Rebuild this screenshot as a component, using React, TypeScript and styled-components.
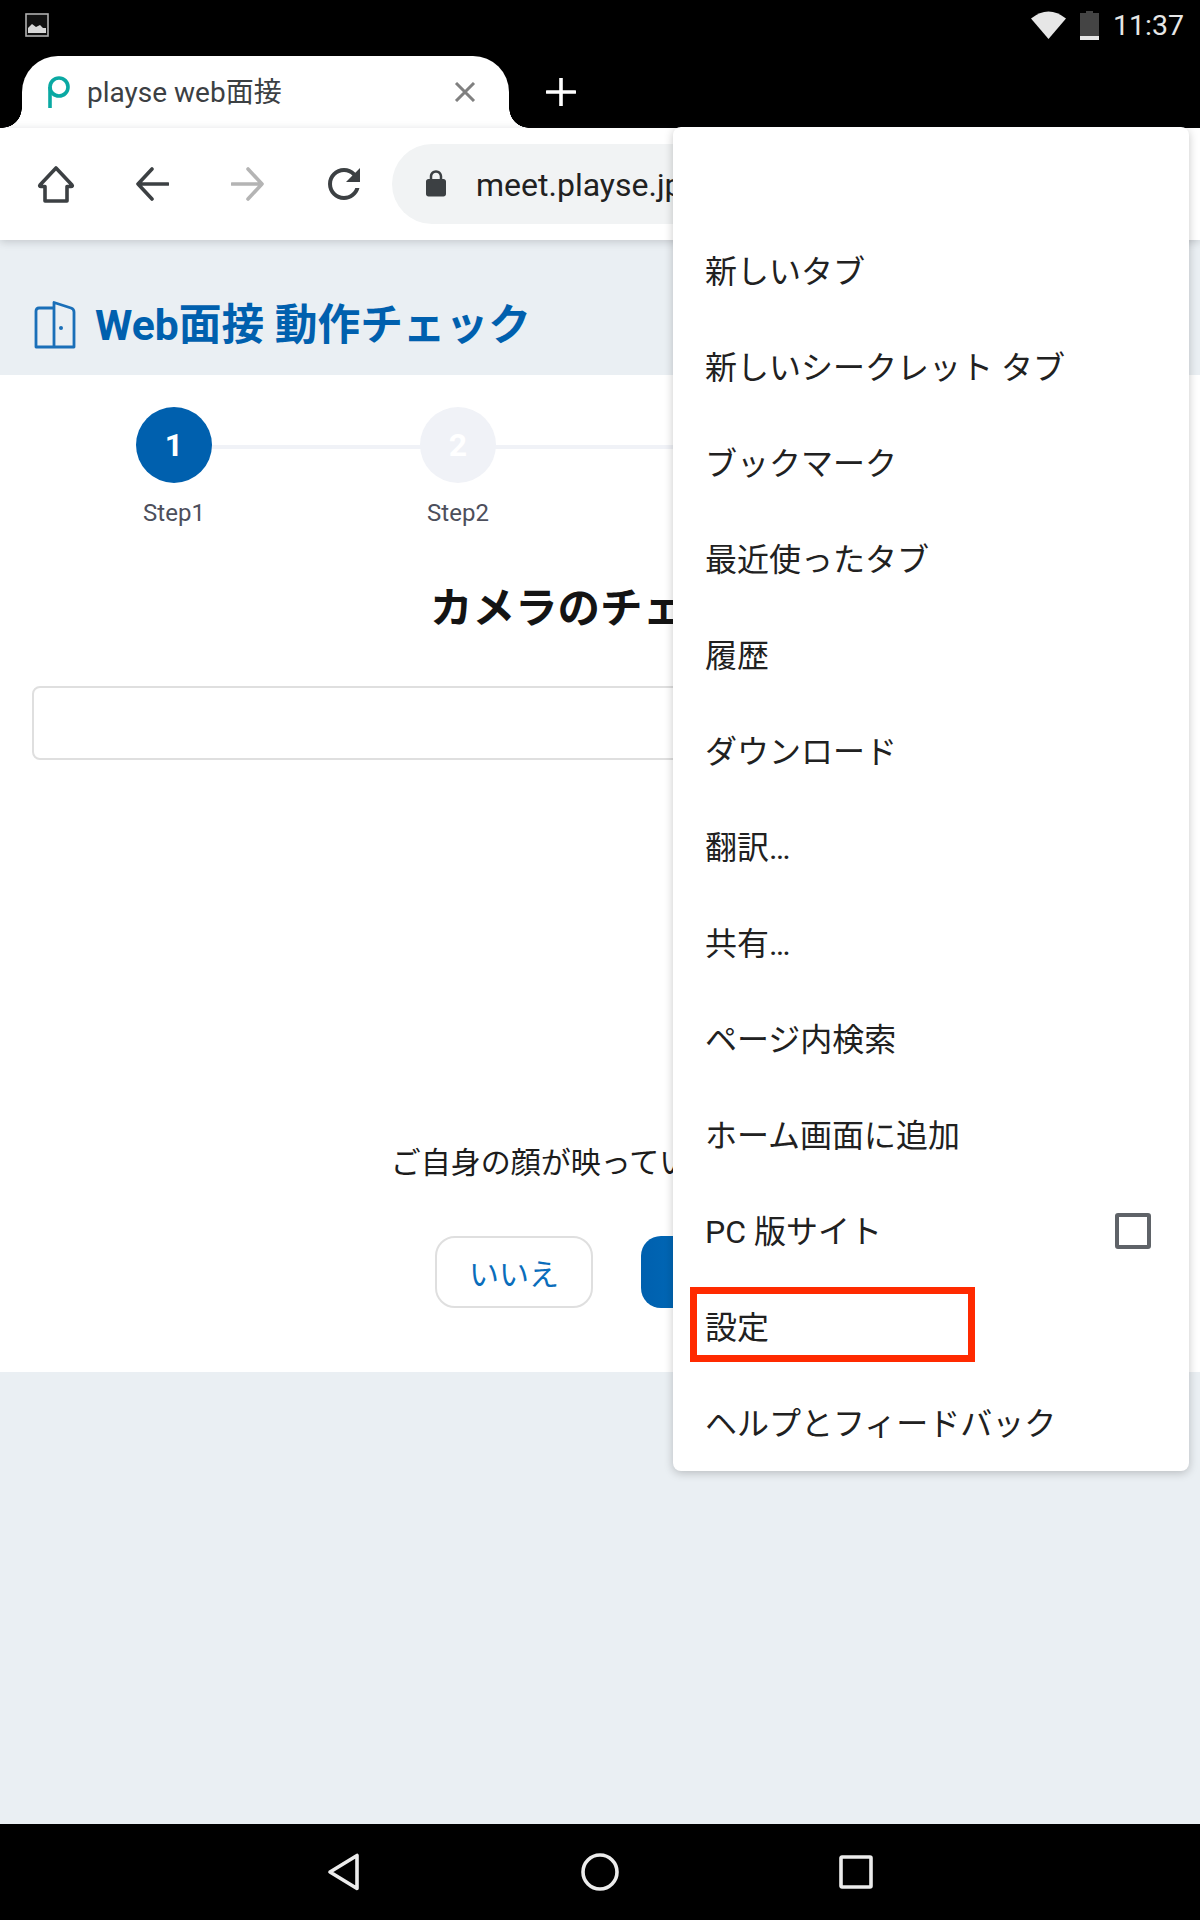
import React from 'react';
import styled, { createGlobalStyle } from 'styled-components';

const colors = {
  black: '#000000',
  pageBg: '#eaeff3',
  white: '#ffffff',
  blue: '#0060ae',
  icon: '#3c4043',
  text: '#212121',
  border: '#dfdfdf',
  stepIdle: '#f0f2f7',
};

const GlobalStyle = createGlobalStyle`
  html, body {
    margin: 0;
    padding: 0;
    background: ${colors.black};
  }
  * {
    box-sizing: border-box;
  }
  body {
    font-family: Roboto, "Noto Sans CJK JP", sans-serif;
  }
`;

const menuItems = [
  '新しいタブ',
  '新しいシークレット タブ',
  'ブックマーク',
  '最近使ったタブ',
  '履歴',
  'ダウンロード',
  '翻訳…',
  '共有…',
  'ページ内検索',
  'ホーム画面に追加',
  'PC 版サイト',
  '設定',
  'ヘルプとフィードバック',
];

const steps = ['Step1', 'Step2', 'Step3', 'Step4'];

export default function App() {
  return (
    <Screen>
      <GlobalStyle />
      <StatusBar>
        <PictureIcon />
        <StatusRight>
          <WifiIcon />
          <BatteryIcon />
          <Clock>11:37</Clock>
        </StatusRight>
      </StatusBar>
      <TabStrip>
        <Tab>
          <FaviconIcon />
          <TabTitle>playse web面接</TabTitle>
          <CloseIcon />
        </Tab>
        <PlusIcon />
      </TabStrip>
      <Toolbar>
        <ToolButton>
          <HomeIcon />
        </ToolButton>
        <ToolButton>
          <ArrowIcon color={colors.icon} />
        </ToolButton>
        <ToolButton>
          <ArrowIcon color="#b4b4b4" flip />
        </ToolButton>
        <ToolButton>
          <ReloadIcon />
        </ToolButton>
        <UrlPill>
          <LockIcon />
          <UrlText>meet.playse.jp</UrlText>
        </UrlPill>
      </Toolbar>
      <Main>
        <PageHeader>
          <HeaderIcon>
            <DoorIcon />
          </HeaderIcon>
          <PageTitle>Web面接 動作チェック</PageTitle>
        </PageHeader>
        <Content>
          <StepRow>
            {steps.map((step, index) => (
              <Step key={step} $last={index === steps.length - 1}>
                <StepCircle $active={index === 0}>{index + 1}</StepCircle>
                <StepLabel>{step}</StepLabel>
              </Step>
            ))}
          </StepRow>
          <Heading>カメラのチェック</Heading>
          <SelectBox />
          <VideoArea />
          <Question>ご自身の顔が映っていますか{'\uFF1F'}</Question>
          <ButtonRow>
            <OutlineButton>いいえ</OutlineButton>
            <PrimaryButton>はい</PrimaryButton>
          </ButtonRow>
        </Content>
      </Main>
      <NavBar>
        <NavSlot>
          <NavBackIcon />
        </NavSlot>
        <NavSlot>
          <NavHomeIcon />
        </NavSlot>
        <NavSlot>
          <NavRecentIcon />
        </NavSlot>
      </NavBar>
      <Menu>
        <MenuSpacer />
        {menuItems.map((item) => (
          <MenuRow key={item}>
            <MenuLabel>{item}</MenuLabel>
            {item === 'PC 版サイト' && <MenuCheckbox />}
          </MenuRow>
        ))}
        <Highlight />
      </Menu>
    </Screen>
  );
}

function PictureIcon() {
  return (
    <svg width="24" height="24" viewBox="0 0 24 24">
      <rect x="1" y="1" width="22" height="22" fill="#111" stroke="#b0b0b0" strokeWidth="1.6" />
      <path d="M3 20 V15 L7 11 L11 14 L15 12 L18 15 L21 15 V20 Z" fill="#d8d8d8" />
    </svg>
  );
}

function WifiIcon() {
  return (
    <svg width="35" height="28" viewBox="0 0 35 28">
      <path d="M0 7.5 Q17.5 -6.5 35 7.5 L17.5 28 Z" fill="#e6e6e6" />
    </svg>
  );
}

function BatteryIcon() {
  return (
    <svg width="19" height="29" viewBox="0 0 19 29">
      <path d="M6 0 H13 V2 H19 V25 H0 V2 H6 Z" fill="#444444" />
      <rect x="0" y="25" width="19" height="4" fill="#e6e6e6" />
    </svg>
  );
}

function FaviconIcon() {
  return (
    <svg width="23" height="33" viewBox="0 0 23 33">
      <circle cx="12" cy="11" r="9" fill="none" stroke="#0aa9a3" strokeWidth="3.6" />
      <path d="M3 11 V32" fill="none" stroke="#0aa9a3" strokeWidth="3.6" />
    </svg>
  );
}

function CloseIcon() {
  return (
    <svg width="22" height="20" viewBox="0 0 22 20">
      <path d="M2 1 L20 19 M20 1 L2 19" stroke="#808080" strokeWidth="3" fill="none" />
    </svg>
  );
}

function PlusIcon() {
  return (
    <svg width="30" height="28" viewBox="0 0 30 28">
      <path d="M15 0 V28 M1 14 H29" stroke="#ffffff" strokeWidth="3.6" strokeLinecap="round" fill="none" />
    </svg>
  );
}

function HomeIcon() {
  return (
    <svg width="40" height="40" viewBox="0 0 40 40">
      <path
        d="M20 4 L36 21 Q37 22.5 35 22.5 H31 V37 H9 V22.5 H5 Q3 22.5 4 21 Z"
        fill="none"
        stroke={colors.icon}
        strokeWidth="3.6"
        strokeLinejoin="round"
      />
    </svg>
  );
}

function ArrowIcon({ color, flip }: { color: string; flip?: boolean }) {
  return (
    <svg width="34" height="34" viewBox="0 0 34 34" style={flip ? { transform: 'scaleX(-1)' } : undefined}>
      <path
        d="M17 2 L3 17 L17 32 M3 17 H33"
        fill="none"
        stroke={color}
        strokeWidth="3.6"
        strokeLinecap="round"
        strokeLinejoin="round"
      />
    </svg>
  );
}

function ReloadIcon() {
  return (
    <svg width="48" height="48" viewBox="0 0 24 24">
      <path
        d="M17.65 6.35C16.2 4.9 14.21 4 12 4c-4.42 0-7.99 3.58-7.99 8s3.57 8 7.99 8c3.73 0 6.84-2.55 7.73-6h-2.08c-.82 2.33-3.04 4-5.65 4-3.31 0-6-2.69-6-6s2.69-6 6-6c1.66 0 3.14.69 4.22 1.78L13 11h7V4l-2.35 2.35z"
        fill={colors.icon}
      />
    </svg>
  );
}

function LockIcon() {
  return (
    <svg width="30" height="30" viewBox="0 0 24 24">
      <path
        d="M18 8h-1V6c0-2.76-2.24-5-5-5S7 3.24 7 6v2H6c-1.1 0-2 .9-2 2v10c0 1.1.9 2 2 2h12c1.1 0 2-.9 2-2V10c0-1.1-.9-2-2-2zM9 6c0-1.66 1.34-3 3-3s3 1.34 3 3v2H9V6z"
        fill={colors.icon}
      />
    </svg>
  );
}

function DoorIcon() {
  return (
    <svg width="42" height="48" viewBox="0 0 42 48">
      <path
        d="M20 7 H5 Q2 7 2 10 V46 H40 V11 Q40 8 37 7 L20 1.5 V46"
        fill="none"
        stroke="#1a6fb8"
        strokeWidth="2.8"
        strokeLinejoin="round"
      />
      <circle cx="27" cy="27" r="2" fill="#1a6fb8" />
    </svg>
  );
}

function NavBackIcon() {
  return (
    <svg width="34" height="38" viewBox="0 0 34 38">
      <path
        d="M30 2.5 V35.5 L3 19 Z"
        fill="none"
        stroke="#ececec"
        strokeWidth="3.6"
        strokeLinejoin="round"
      />
    </svg>
  );
}

function NavHomeIcon() {
  return (
    <svg width="38" height="38" viewBox="0 0 38 38">
      <circle cx="19" cy="19" r="17" fill="none" stroke="#ececec" strokeWidth="3.6" />
    </svg>
  );
}

function NavRecentIcon() {
  return (
    <svg width="34" height="34" viewBox="0 0 34 34">
      <rect x="2" y="2" width="30" height="30" rx="1" fill="none" stroke="#ececec" strokeWidth="3.6" />
    </svg>
  );
}

const Screen = styled.div`
  position: relative;
  width: 1200px;
  height: 1920px;
  display: flex;
  flex-direction: column;
  overflow: hidden;
  background: ${colors.pageBg};
`;

const StatusBar = styled.div`
  height: 56px;
  flex: none;
  display: flex;
  align-items: center;
  justify-content: space-between;
  padding: 0 16px 6px 25px;
  background: ${colors.black};
`;

const StatusRight = styled.div`
  display: flex;
  align-items: center;
  gap: 14px;
`;

const Clock = styled.span`
  font-size: 28.5px;
  color: #e6e6e6;
`;

const TabStrip = styled.div`
  height: 72px;
  flex: none;
  display: flex;
  align-items: center;
  padding-left: 22px;
  gap: 37px;
  background: ${colors.black};
`;

const Tab = styled.div`
  position: relative;
  width: 487px;
  height: 72px;
  display: flex;
  align-items: center;
  padding: 0 33px 0 25px;
  background: ${colors.white};
  border-radius: 36px 36px 0 0;

  &::before,
  &::after {
    content: '';
    position: absolute;
    bottom: 0;
    width: 20px;
    height: 20px;
  }

  &::before {
    left: -20px;
    background: radial-gradient(circle at 0 0, transparent 19.5px, ${colors.white} 20px);
  }

  &::after {
    right: -20px;
    background: radial-gradient(circle at 100% 0, transparent 19.5px, ${colors.white} 20px);
  }
`;

const TabTitle = styled.span`
  flex: 1;
  margin: 0 0 4px 17px;
  font-size: 28px;
  color: ${colors.icon};
`;

const Toolbar = styled.div`
  position: relative;
  z-index: 1;
  height: 112px;
  flex: none;
  display: flex;
  align-items: center;
  padding: 0 100px 0 8px;
  background: ${colors.white};
  box-shadow: 0 2px 8px rgba(60, 64, 67, 0.22);
`;

const ToolButton = styled.div`
  width: 96px;
  height: 80px;
  flex: none;
  display: flex;
  align-items: center;
  justify-content: center;
`;

const UrlPill = styled.div`
  flex: 1;
  height: 80px;
  display: flex;
  align-items: center;
  padding-left: 29px;
  gap: 25px;
  border-radius: 40px;
  background: #f1f3f4;
`;

const UrlText = styled.span`
  padding-top: 2px;
  font-size: 32px;
  color: ${colors.text};
`;

const Main = styled.main`
  flex: 1;
  display: flex;
  flex-direction: column;
  background: ${colors.pageBg};
`;

const PageHeader = styled.header`
  height: 135px;
  display: flex;
  align-items: center;
  gap: 19px;
  padding: 27px 0 0 34px;
`;

const HeaderIcon = styled.div`
  display: flex;
  margin-top: 8px;
`;

const PageTitle = styled.h1`
  margin: 0;
  font-size: 42.7px;
  font-weight: 700;
  color: ${colors.blue};
`;

const Content = styled.section`
  display: flex;
  flex-direction: column;
  align-items: center;
  padding: 32px 32px 64px;
  background: ${colors.white};
`;

const StepRow = styled.div`
  display: grid;
  grid-template-columns: repeat(4, 284px);
`;

const Step = styled.div<{ $last: boolean }>`
  position: relative;
  display: flex;
  flex-direction: column;
  align-items: center;

  &::after {
    content: ${({ $last }) => ($last ? 'none' : "''")};
    position: absolute;
    top: 38px;
    left: 50%;
    width: 100%;
    height: 4px;
    background: ${colors.stepIdle};
  }
`;

const StepCircle = styled.div<{ $active: boolean }>`
  position: relative;
  z-index: 1;
  width: 76px;
  height: 76px;
  display: flex;
  align-items: center;
  justify-content: center;
  border-radius: 50%;
  font-size: 32px;
  font-weight: 700;
  color: ${colors.white};
  background: ${({ $active }) => ($active ? colors.blue : colors.stepIdle)};
`;

const StepLabel = styled.div`
  margin-top: 16px;
  font-size: 24px;
  line-height: 28px;
  color: #4d4f5c;
`;

const Heading = styled.h2`
  margin: 52px 0 0;
  font-size: 42.5px;
  line-height: 60px;
  font-weight: 700;
  color: #141414;
`;

const SelectBox = styled.div`
  width: 100%;
  height: 74px;
  margin-top: 47px;
  border: 2px solid ${colors.border};
  border-radius: 8px;
`;

const VideoArea = styled.div`
  height: 383px;
`;

const Question = styled.p`
  margin: 0;
  font-size: 30px;
  line-height: 40px;
  color: #1c1c1c;
`;

const ButtonRow = styled.div`
  display: flex;
  gap: 48px;
  margin-top: 53px;
`;

const OutlineButton = styled.div`
  width: 158px;
  height: 72px;
  display: flex;
  align-items: center;
  justify-content: center;
  border: 2px solid ${colors.border};
  border-radius: 20px;
  font-size: 30px;
  color: #0a6dbb;
`;

const PrimaryButton = styled.div`
  width: 124px;
  height: 72px;
  display: flex;
  align-items: center;
  justify-content: center;
  border-radius: 20px;
  font-size: 30px;
  color: ${colors.white};
  background: linear-gradient(90deg, #0060ae, #0078c8);
`;

const NavBar = styled.nav`
  height: 96px;
  flex: none;
  display: flex;
  align-items: center;
  justify-content: center;
  background: ${colors.black};
`;

const NavSlot = styled.div`
  width: 256px;
  display: flex;
  justify-content: center;
`;

const Menu = styled.div`
  position: absolute;
  z-index: 2;
  top: 127px;
  left: 673px;
  width: 516px;
  border-radius: 8px;
  background: ${colors.white};
  box-shadow: 0 2px 10px rgba(0, 0, 0, 0.22);
`;

const MenuSpacer = styled.div`
  height: 96px;
`;

const MenuRow = styled.div`
  height: 96px;
  display: flex;
  align-items: center;
  justify-content: space-between;
  padding: 0 38px 0 32px;
  font-size: 32px;
  color: ${colors.text};
`;

const MenuLabel = styled.span`
  margin-bottom: 5px;
`;

const MenuCheckbox = styled.div`
  width: 36px;
  height: 36px;
  border: 4px solid #5f6368;
  border-radius: 3px;
`;

const Highlight = styled.div`
  position: absolute;
  top: 1160px;
  left: 17px;
  width: 285px;
  height: 75px;
  border: 7px solid #ff2a00;
`;
